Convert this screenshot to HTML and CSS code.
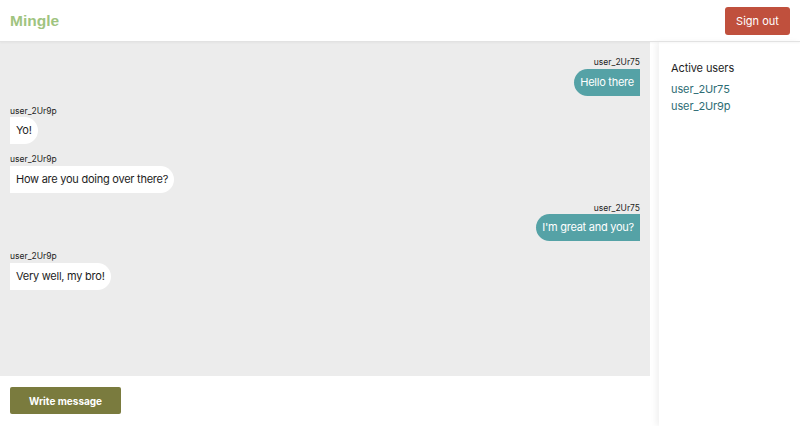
FILE: index.html
```html
<!DOCTYPE html>
<html lang="en">
<head>
<meta charset="utf-8">
<title>Mingle</title>
<link rel="stylesheet" href="styles.css">
</head>
<body>
<header class="topbar">
  <div class="logo">Mingle</div>
  <button class="signout">Sign out</button>
</header>
<div class="main">
  <section class="chat-col">
    <div class="chat">
      <div class="msg mine">
        <div class="author">user_2Ur75</div>
        <div class="bubble">Hello there</div>
      </div>
      <div class="msg">
        <div class="author">user_2Ur9p</div>
        <div class="bubble">Yo!</div>
      </div>
      <div class="msg">
        <div class="author">user_2Ur9p</div>
        <div class="bubble">How are you doing over there?</div>
      </div>
      <div class="msg mine">
        <div class="author">user_2Ur75</div>
        <div class="bubble">I'm great and you?</div>
      </div>
      <div class="msg">
        <div class="author">user_2Ur9p</div>
        <div class="bubble">Very well, my bro!</div>
      </div>
    </div>
    <div class="composer">
      <button class="write">Write message</button>
    </div>
  </section>
  <aside class="sidebar">
    <h2 class="side-title">Active users</h2>
    <a class="user" href="#">user_2Ur75</a>
    <a class="user" href="#">user_2Ur9p</a>
  </aside>
</div>
</body>
</html>
```
FILE: styles.css
```css
* { box-sizing: border-box; }
html, body { margin: 0; padding: 0; height: 100%; }
body {
  font-family: Inter, "Liberation Sans", sans-serif;
  color: #1d1d1d;
  background: #fff;
  display: flex;
  flex-direction: column;
  overflow: hidden;
}
.topbar {
  height: 42px;
  flex: none;
  display: flex;
  align-items: center;
  justify-content: space-between;
  padding: 0 10px;
  border-bottom: 1px solid #e2e2e2;
  box-shadow: 0 1px 2px rgba(0,0,0,0.04);
  position: relative;
  z-index: 2;
}
.logo {
  font-family: "Liberation Sans", Arial, sans-serif;
  font-weight: 700;
  font-size: 15.5px;
  color: #9fc47f;
}
.signout {
  font-family: inherit;
  font-size: 11px;
  color: #fff;
  background: #c0503d;
  border: none;
  border-radius: 3px;
  width: 65px;
  height: 28px;
  padding: 0;
}
.main {
  flex: 1;
  display: flex;
  min-height: 0;
}
.chat-col {
  width: 650px;
  display: flex;
  flex-direction: column;
}
.chat {
  flex: 1;
  background: #ececec;
  padding: 15px 10px;
  display: flex;
  flex-direction: column;
}
.msg {
  display: flex;
  flex-direction: column;
  align-items: flex-start;
  margin-bottom: 10px;
}
.msg.mine { align-items: flex-end; }
.author {
  font-size: 8.5px;
  line-height: 11.5px;
  color: #1d1d1d;
}
.bubble {
  font-size: 11px;
  letter-spacing: -0.25px;
  line-height: 15px;
  padding: 6px 6px;
  background: #fff;
  color: #1d1d1d;
  border-radius: 0 14px 14px 0;
}
.msg.mine .bubble {
  background: #55a2a6;
  color: #fff;
  border-radius: 14px 0 0 14px;
}
.composer {
  height: 50px;
  flex: none;
  padding: 11px 10px;
  background: #fff;
}
.write {
  font-family: inherit;
  font-weight: 700;
  font-size: 10px;
  color: #fff;
  background: #7a7b3e;
  border: none;
  border-radius: 2px;
  width: 111px;
  height: 27px;
  padding: 0;
}
.sidebar {
  flex: 1;
  margin-left: 9px;
  background: #fff;
  padding: 19px 12px;
  display: flex;
  flex-direction: column;
  align-items: flex-start;
  box-shadow: -3px 0 6px rgba(0,0,0,0.06);
}
.side-title {
  margin: 0 0 6px;
  font-size: 11px;
  letter-spacing: -0.1px;
  font-weight: 400;
  line-height: 14px;
  color: #1d1d1d;
}
.user {
  font-size: 11px;
  letter-spacing: -0.1px;
  line-height: 17px;
  color: #2f6d75;
  text-decoration: none;
}
```
